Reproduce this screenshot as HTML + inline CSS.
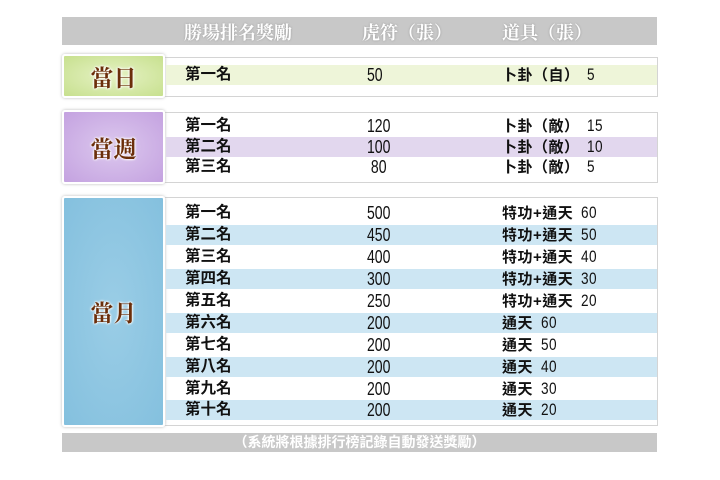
<!DOCTYPE html>
<html><head><meta charset="utf-8"><style>
body{margin:0;width:720px;height:480px;background:#fff;position:relative;overflow:hidden;font-family:"Liberation Sans","Noto Sans CJK TC",sans-serif;}
.a{position:absolute}
.hdr{left:62px;top:17px;width:595px;height:28px;background:#c8c8c8}
.ht{position:absolute;top:3px;font-family:"Noto Serif CJK SC",serif;font-size:18px;line-height:24px;color:#fff;text-shadow:0 0 2px #999;font-weight:bold}
.box{left:165px;width:492px;border:1px solid #d4d4d4;border-left:none;background:#fff}
.lab{left:62px;width:99px;border:2px solid #fff;box-shadow:0 0 3px #bbb;border-radius:3px;display:flex;align-items:center;justify-content:center;font-family:"Noto Serif CJK SC",serif;font-weight:bold;font-size:23px;color:#6b2e0a;text-shadow:0 0 2px #fff,0 0 2px #fff,0 0 3px #fff}
.row{position:absolute;left:166px;width:491px;height:20px;font-size:15.5px;color:#111;line-height:20px}
.row span{position:absolute;white-space:nowrap}
.r1{left:19px;font-weight:bold}
.r2{left:201px;font-size:18px;transform:scaleX(.78);transform-origin:left}
.r3{left:336px;font-weight:bold;font-size:15px;letter-spacing:.5px}
.r3 b{font-weight:normal;font-size:17px;display:inline-block;transform:scaleX(.8);transform-origin:left;margin-left:3px}
.foot{left:62px;top:433px;width:595px;height:19px;background:#c8c8c8;color:#fff;font-size:14px;font-weight:bold;text-align:center;line-height:19px}
</style></head><body>
<div class="a hdr"><span class="ht" style="left:122px">勝場排名獎勵</span><span class="ht" style="left:300px">虎符（張）</span><span class="ht" style="left:440px">道具（張）</span></div>

<div class="a box" style="top:57px;height:38px"></div>
<div class="a lab" style="top:54px;height:40px;background:radial-gradient(#e6f2c5,#c7e08e)">當日</div>
<div class="row" style="top:65px;background:#eef5d9"><span class="r1">第一名</span><span class="r2">50</span><span class="r3">卜卦（自） <b>5</b></span></div>

<div class="a box" style="top:112px;height:69px"></div>
<div class="a lab" style="top:110px;height:70px;background:radial-gradient(#dcc8ee,#c4a2e0)">當週</div>
<div class="row" style="top:116px"><span class="r1">第一名</span><span class="r2">120</span><span class="r3">卜卦（敵） <b>15</b></span></div>
<div class="row" style="top:137px;background:#e2d7ee"><span class="r1">第二名</span><span class="r2">100</span><span class="r3">卜卦（敵） <b>10</b></span></div>
<div class="row" style="top:157px"><span class="r1">第三名</span><span class="r2">&nbsp;80</span><span class="r3">卜卦（敵） <b>5</b></span></div>

<div class="a box" style="top:197px;height:227px"></div>
<div class="a lab" style="top:196px;height:227px;background:radial-gradient(#9acde6,#84c0de)">當月</div>
<div class="row" style="top:203px"><span class="r1">第一名</span><span class="r2">500</span><span class="r3">特功+通天 <b>60</b></span></div>
<div class="row" style="top:225px;background:#cde6f3"><span class="r1">第二名</span><span class="r2">450</span><span class="r3">特功+通天 <b>50</b></span></div>
<div class="row" style="top:247px"><span class="r1">第三名</span><span class="r2">400</span><span class="r3">特功+通天 <b>40</b></span></div>
<div class="row" style="top:269px;background:#cde6f3"><span class="r1">第四名</span><span class="r2">300</span><span class="r3">特功+通天 <b>30</b></span></div>
<div class="row" style="top:291px"><span class="r1">第五名</span><span class="r2">250</span><span class="r3">特功+通天 <b>20</b></span></div>
<div class="row" style="top:313px;background:#cde6f3"><span class="r1">第六名</span><span class="r2">200</span><span class="r3">通天 <b>60</b></span></div>
<div class="row" style="top:335px"><span class="r1">第七名</span><span class="r2">200</span><span class="r3">通天 <b>50</b></span></div>
<div class="row" style="top:357px;background:#cde6f3"><span class="r1">第八名</span><span class="r2">200</span><span class="r3">通天 <b>40</b></span></div>
<div class="row" style="top:379px"><span class="r1">第九名</span><span class="r2">200</span><span class="r3">通天 <b>30</b></span></div>
<div class="row" style="top:400px;background:#cde6f3"><span class="r1">第十名</span><span class="r2">200</span><span class="r3">通天 <b>20</b></span></div>

<div class="a foot">（系統將根據排行榜記錄自動發送獎勵）</div>
</body></html>
